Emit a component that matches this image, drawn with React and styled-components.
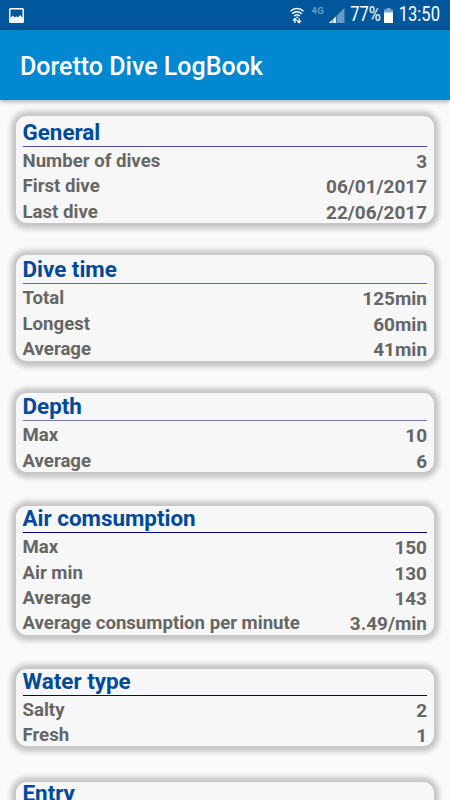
import styled, { createGlobalStyle } from "styled-components";

const GlobalStyle = createGlobalStyle`
  * {
    box-sizing: border-box;
  }
  body {
    margin: 0;
    background-color: #fafafa;
    font-family: Roboto, "Liberation Sans", sans-serif;
  }
`;
const Screen = styled.div`
  width: 450px;
  height: 800px;
  overflow: hidden;
  display: flex;
  flex-direction: column;
  background-color: #fafafa;
`;
const StatusBar = styled.div`
  flex: none;
  height: 30px;
  padding: 0 10px 0 9px;
  display: flex;
  align-items: center;
  justify-content: space-between;
  background-color: #01579b;
  color: #fff;
`;
const StatusGroup = styled.div`
  display: flex;
  align-items: center;
`;
const Network = styled.span`
  margin: -9px 5px 0 7px;
  font-size: 9.5px;
  font-weight: 700;
  letter-spacing: 0.3px;
  color: #6f9fc7;
`;
const StatusText = styled.span`
  width: ${({ $width }) => $width}px;
  display: flex;
  justify-content: flex-end;
  font-size: 19.5px;
  line-height: 30px;
  transform: scaleX(0.85);
  transform-origin: right;
`;
const BatterySlot = styled.div`
  display: flex;
  margin: 0 1px 0 3px;
`;
const Toolbar = styled.header`
  flex: none;
  height: 70px;
  padding: 2px 20px 0;
  display: flex;
  align-items: center;
  position: relative;
  background-color: #0288d1;
  box-shadow: 0 1px 5px rgba(0, 0, 0, 0.4);
`;
const AppTitle = styled.h1`
  margin: 0;
  font-size: 25px;
  font-weight: 500;
  color: #fff;
  white-space: nowrap;
`;
const List = styled.main`
  padding: 16px 16px 0;
`;
const Card = styled.section`
  height: ${({ $height }) => $height}px;
  margin-bottom: ${({ $gap }) => $gap}px;
  padding: 0 7px 0 6.5px;
  border-radius: 11px;
  background-color: #f7f7f7;
  box-shadow: 0 0.5px 5px 5px #c6c6c6;
`;
const CardTitle = styled.h2`
  height: ${({ $height }) => $height}px;
  margin: 0 0 2px;
  display: flex;
  align-items: flex-end;
  border-bottom: 1px solid ${({ $line }) => $line};
  font-size: 22.4px;
  font-weight: 700;
  line-height: 27px;
  color: #01499b;
`;
const Row = styled.div`
  height: 25.4px;
  display: flex;
  justify-content: space-between;
  font-size: 18.62px;
  font-weight: 700;
  line-height: 25.4px;
  color: #666;
  white-space: nowrap;
`;
const Value = styled.span`
  font-size: 18.95px;
`;

const PictureIcon = () => (
  <svg width="15" height="15" viewBox="0 0 15 15">
    <rect x="0.75" y="0.75" width="13.5" height="13.5" rx="0.8" fill="none" stroke="#fff" strokeWidth="1.5" />
    <path d="M1.5 12V9.8L4 7.6l1.5 2L7.5 8.2l1.5 1.4L11.3 7l2.2 2.7V12z" fill="#fff" />
    <path d="M1 12.5h13" stroke="#fff" strokeWidth="2.5" />
  </svg>
);

const WifiIcon = () => (
  <svg width="14" height="17" viewBox="0 0 14 17" fill="none" stroke="#fff" strokeWidth="1.5">
    <path d="M0.5 4.2C4 0.6 10 0.6 13.5 4.2M2.3 6.7C5 4.1 9 4.1 11.7 6.7M4.2 9C6 7.3 8 7.3 9.8 9" />
    <path d="M5.4 9.8h3.2L7 11.5z" fill="#fff" stroke="none" />
    <path d="M4.9 16v-4.3M3 13.6l1.9-2.1 1.8 2.1M9.1 11.3v4.5M7.3 13.7l1.8 2 1.9-2" strokeWidth="1.3" />
  </svg>
);

const SignalIcon = () => (
  <svg width="16" height="15" viewBox="0 0 16 15">
    <path d="M0 15L15.5 0v15z" fill="#6799c3" />
    <path d="M0 15L7 8.5V15z" fill="#fff" />
    <path d="M3.8 10v5M7.3 7v8" stroke="#01579b" strokeWidth="0.7" />
  </svg>
);

const BatteryIcon = () => (
  <svg width="9" height="15" viewBox="0 0 9 15">
    <path d="M2.5 0h4v1.5H9V15H0V1.5h2.5z" fill="#7ba6cb" />
    <path d="M0 4.5h9V15H0z" fill="#fff" />
  </svg>
);

const sections = [
  {
    title: "General",
    top: 31,
    height: 107,
    gap: 31.5,
    line: "#4d4a9e",
    rows: [
      ["Number of dives", "3"],
      ["First dive", "06/01/2017"],
      ["Last dive", "22/06/2017"],
    ],
  },
  {
    title: "Dive time",
    top: 29.7,
    height: 106.5,
    gap: 31.5,
    line: "#66699f",
    rows: [
      ["Total", "125min"],
      ["Longest", "60min"],
      ["Average", "41min"],
    ],
  },
  {
    title: "Depth",
    top: 28.9,
    height: 79.5,
    gap: 34,
    line: "#7674ac",
    rows: [
      ["Max", "10"],
      ["Average", "6"],
    ],
  },
  {
    title: "Air comsumption",
    top: 27.2,
    height: 129,
    gap: 34,
    line: "#000080",
    rows: [
      ["Max", "150"],
      ["Air min", "130"],
      ["Average", "143"],
      ["Average consumption per minute", "3.49/min"],
    ],
  },
  {
    title: "Water type",
    top: 26.8,
    height: 77,
    gap: 35.5,
    line: "#000094",
    rows: [
      ["Salty", "2"],
      ["Fresh", "1"],
    ],
  },
  { title: "Entry", top: 26, height: 77, gap: 0, line: "#000080", rows: [] },
];

const App = () => {
  return (
    <>
      <GlobalStyle />
      <Screen>
        <StatusBar>
          <PictureIcon />
          <StatusGroup>
            <WifiIcon />
            <Network>4G</Network>
            <SignalIcon />
            <StatusText $width={36}>77%</StatusText>
            <BatterySlot>
              <BatteryIcon />
            </BatterySlot>
            <StatusText $width={46}>13:50</StatusText>
          </StatusGroup>
        </StatusBar>
        <Toolbar>
          <AppTitle>Doretto Dive LogBook</AppTitle>
        </Toolbar>
        <List>
          {sections.map(({ title, top, height, gap, line, rows }) => (
            <Card key={title} $height={height} $gap={gap}>
              <CardTitle $height={top} $line={line}>{title}</CardTitle>
              {rows.map(([label, value]) => (
                <Row key={label}>
                  <span>{label}</span>
                  <Value>{value}</Value>
                </Row>
              ))}
            </Card>
          ))}
        </List>
      </Screen>
    </>
  );
};

export default App;
